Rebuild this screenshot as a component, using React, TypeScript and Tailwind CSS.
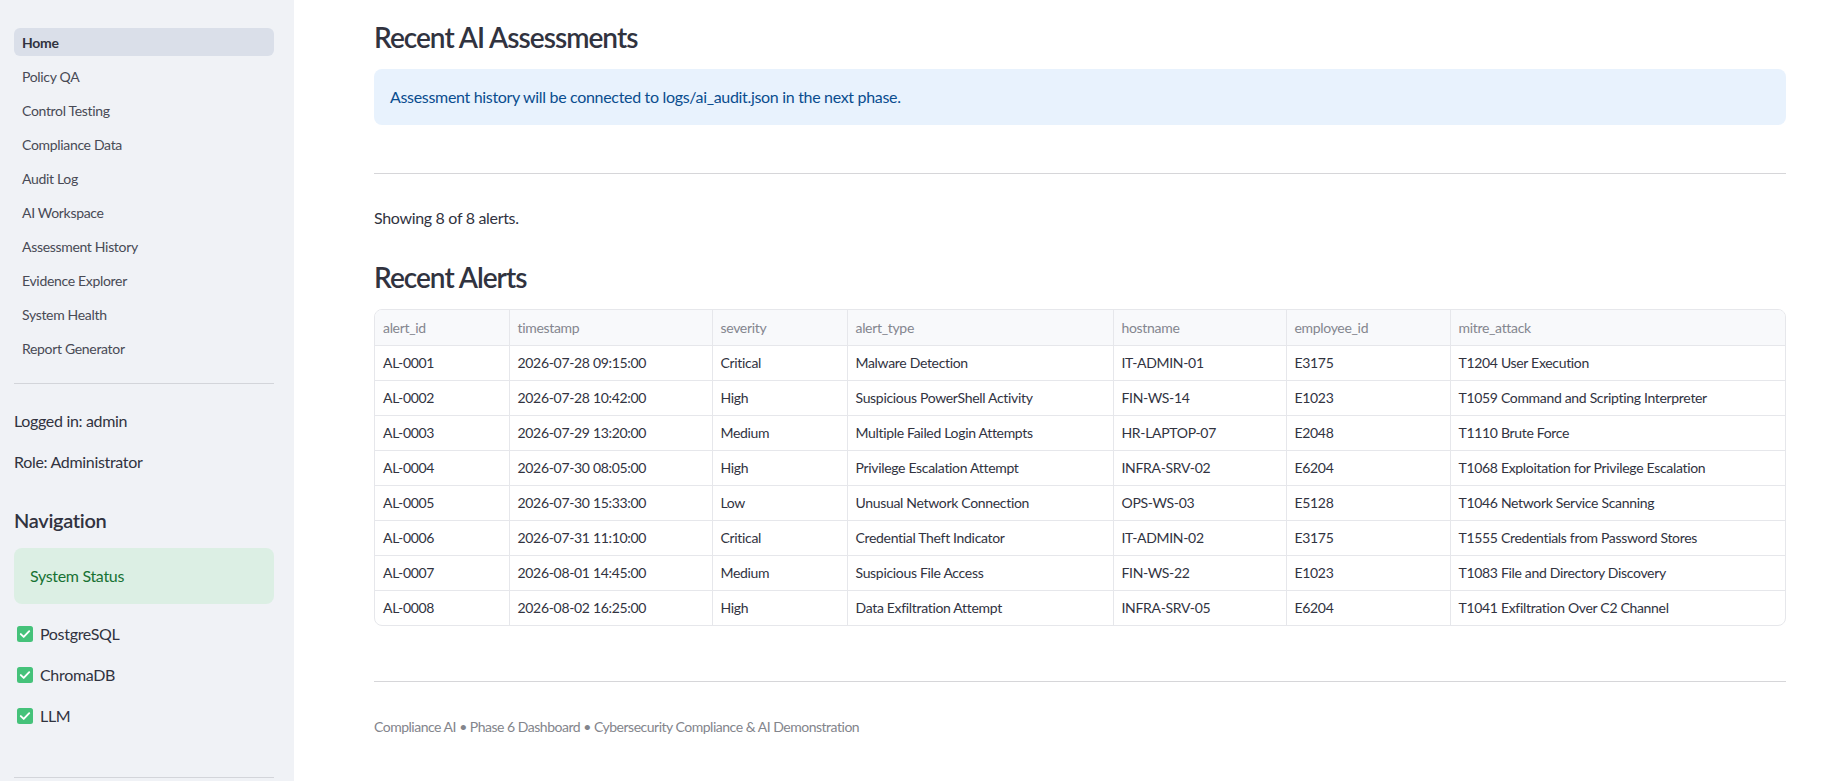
import React from "react";

const FONT = { fontFamily: "Lato, 'Noto Sans', sans-serif" };

const navItems = [
  "Home",
  "Policy QA",
  "Control Testing",
  "Compliance Data",
  "Audit Log",
  "AI Workspace",
  "Assessment History",
  "Evidence Explorer",
  "System Health",
  "Report Generator",
];

const columns = [
  { key: "alert_id", w: 134 },
  { key: "timestamp", w: 203 },
  { key: "severity", w: 135 },
  { key: "alert_type", w: 266 },
  { key: "hostname", w: 173 },
  { key: "employee_id", w: 164 },
  { key: "mitre_attack", w: 335 },
];

const rows = [
  ["AL-0001", "2026-07-28 09:15:00", "Critical", "Malware Detection", "IT-ADMIN-01", "E3175", "T1204 User Execution"],
  ["AL-0002", "2026-07-28 10:42:00", "High", "Suspicious PowerShell Activity", "FIN-WS-14", "E1023", "T1059 Command and Scripting Interpreter"],
  ["AL-0003", "2026-07-29 13:20:00", "Medium", "Multiple Failed Login Attempts", "HR-LAPTOP-07", "E2048", "T1110 Brute Force"],
  ["AL-0004", "2026-07-30 08:05:00", "High", "Privilege Escalation Attempt", "INFRA-SRV-02", "E6204", "T1068 Exploitation for Privilege Escalation"],
  ["AL-0005", "2026-07-30 15:33:00", "Low", "Unusual Network Connection", "OPS-WS-03", "E5128", "T1046 Network Service Scanning"],
  ["AL-0006", "2026-07-31 11:10:00", "Critical", "Credential Theft Indicator", "IT-ADMIN-02", "E3175", "T1555 Credentials from Password Stores"],
  ["AL-0007", "2026-08-01 14:45:00", "Medium", "Suspicious File Access", "FIN-WS-22", "E1023", "T1083 File and Directory Discovery"],
  ["AL-0008", "2026-08-02 16:25:00", "High", "Data Exfiltration Attempt", "INFRA-SRV-05", "E6204", "T1041 Exfiltration Over C2 Channel"],
];

function Check() {
  return (
    <svg width="16" height="16" viewBox="0 0 16 16" className="shrink-0">
      <rect x="0" y="0" width="16" height="16" rx="2.5" fill="#45c27a" />
      <path d="M3.8 8.1 L6.7 10.9 L12.2 5.2" stroke="#ffffff" strokeWidth="1.9" fill="none" strokeLinecap="round" strokeLinejoin="round" />
    </svg>
  );
}

export default function App() {
  return (
    <div className="flex h-[781px] w-full overflow-hidden bg-white text-[#31333f] tracking-[-0.02em]" style={FONT}>
      {/* Sidebar */}
      <aside className="w-[294px] shrink-0 bg-[#f0f2f6] pl-[14px] pr-[20px] pt-[28px]">
        <nav className="flex flex-col gap-[6px]">
          {navItems.map((n, i) => (
            <div
              key={n}
              className={
                i === 0
                  ? "flex h-[28px] items-center rounded-md bg-[#dadfe9] px-2 text-[14px] font-bold text-[#31333f]"
                  : "flex h-[28px] items-center rounded-md px-2 text-[14px] text-[#484a55]"
              }
            >
              {n}
            </div>
          ))}
        </nav>
        <div className="mt-[21px] h-px bg-[#d3d5da]" />
        <div className="mt-[25px] flex h-[24px] items-center text-[16px]">Logged in: admin</div>
        <div className="mt-[17px] flex h-[24px] items-center text-[16px]">Role: Administrator</div>
        <div className="mt-[32px] flex h-[28px] items-center text-[20px] font-semibold">Navigation</div>
        <div className="mt-[14px] flex h-[56px] items-center rounded-lg bg-[#dcefe4] px-4 text-[16px] text-[#177233]">
          System Status
        </div>
        <div className="mt-[18px] flex flex-col gap-[17px]">
          {["PostgreSQL", "ChromaDB", "LLM"].map((s) => (
            <div key={s} className="flex h-[24px] items-center gap-[7px] pl-[3px] text-[16px]">
              <Check />
              <span>{s}</span>
            </div>
          ))}
        </div>
        <div className="mt-[49px] h-px bg-[#d3d5da]" />
      </aside>

      {/* Main */}
      <main className="flex-1 pl-[80px] pr-[51px] pt-[20px]">
        <h3 className="flex h-[34px] items-center text-[28px] font-semibold leading-none tracking-[-0.035em]">
          Recent AI Assessments
        </h3>
        <div className="mt-[15px] flex h-[56px] items-center rounded-lg bg-[#e8f2fd] px-4 text-[16px] text-[#0a4d8f]">
          Assessment history will be connected to logs/ai_audit.json in the next phase.
        </div>
        <div className="mt-[48px] h-px bg-[#d6d6d9]" />
        <div className="mt-[32px] flex h-[24px] items-center text-[16px]">Showing 8 of 8 alerts.</div>
        <h3 className="mt-[30px] flex h-[34px] items-center text-[28px] font-semibold leading-none tracking-[-0.035em]">
          Recent Alerts
        </h3>
        <div className="mt-[15px] overflow-hidden rounded-lg border border-[#e6e7eb]">
          <table className="w-full table-fixed border-collapse text-[14px]">
            <colgroup>
              {columns.map((c) => (
                <col key={c.key} style={{ width: c.w }} />
              ))}
            </colgroup>
            <thead>
              <tr className="h-[35px] bg-[#f8f9fb]">
                {columns.map((c, i) => (
                  <th
                    key={c.key}
                    className={
                      "border-b border-[#e6e7eb] px-2 text-left font-normal text-[#84868f] " +
                      (i < columns.length - 1 ? "border-r" : "")
                    }
                  >
                    {c.key}
                  </th>
                ))}
              </tr>
            </thead>
            <tbody>
              {rows.map((r, ri) => (
                <tr key={ri} className="h-[35px]">
                  {r.map((cell, ci) => (
                    <td
                      key={ci}
                      className={
                        "border-[#e6e7eb] px-2 text-[#31333f] whitespace-nowrap " +
                        (ri < rows.length - 1 ? "border-b " : "") +
                        (ci < r.length - 1 ? "border-r" : "")
                      }
                    >
                      {cell}
                    </td>
                  ))}
                </tr>
              ))}
            </tbody>
          </table>
        </div>
        <div className="mt-[55px] h-px bg-[#d6d6d9]" />
        <div className="mt-[34px] flex h-[20px] items-center text-[14px] tracking-[-0.035em] text-[#83858c]">
          Compliance AI • Phase 6 Dashboard • Cybersecurity Compliance &amp; AI Demonstration
        </div>
      </main>
    </div>
  );
}
